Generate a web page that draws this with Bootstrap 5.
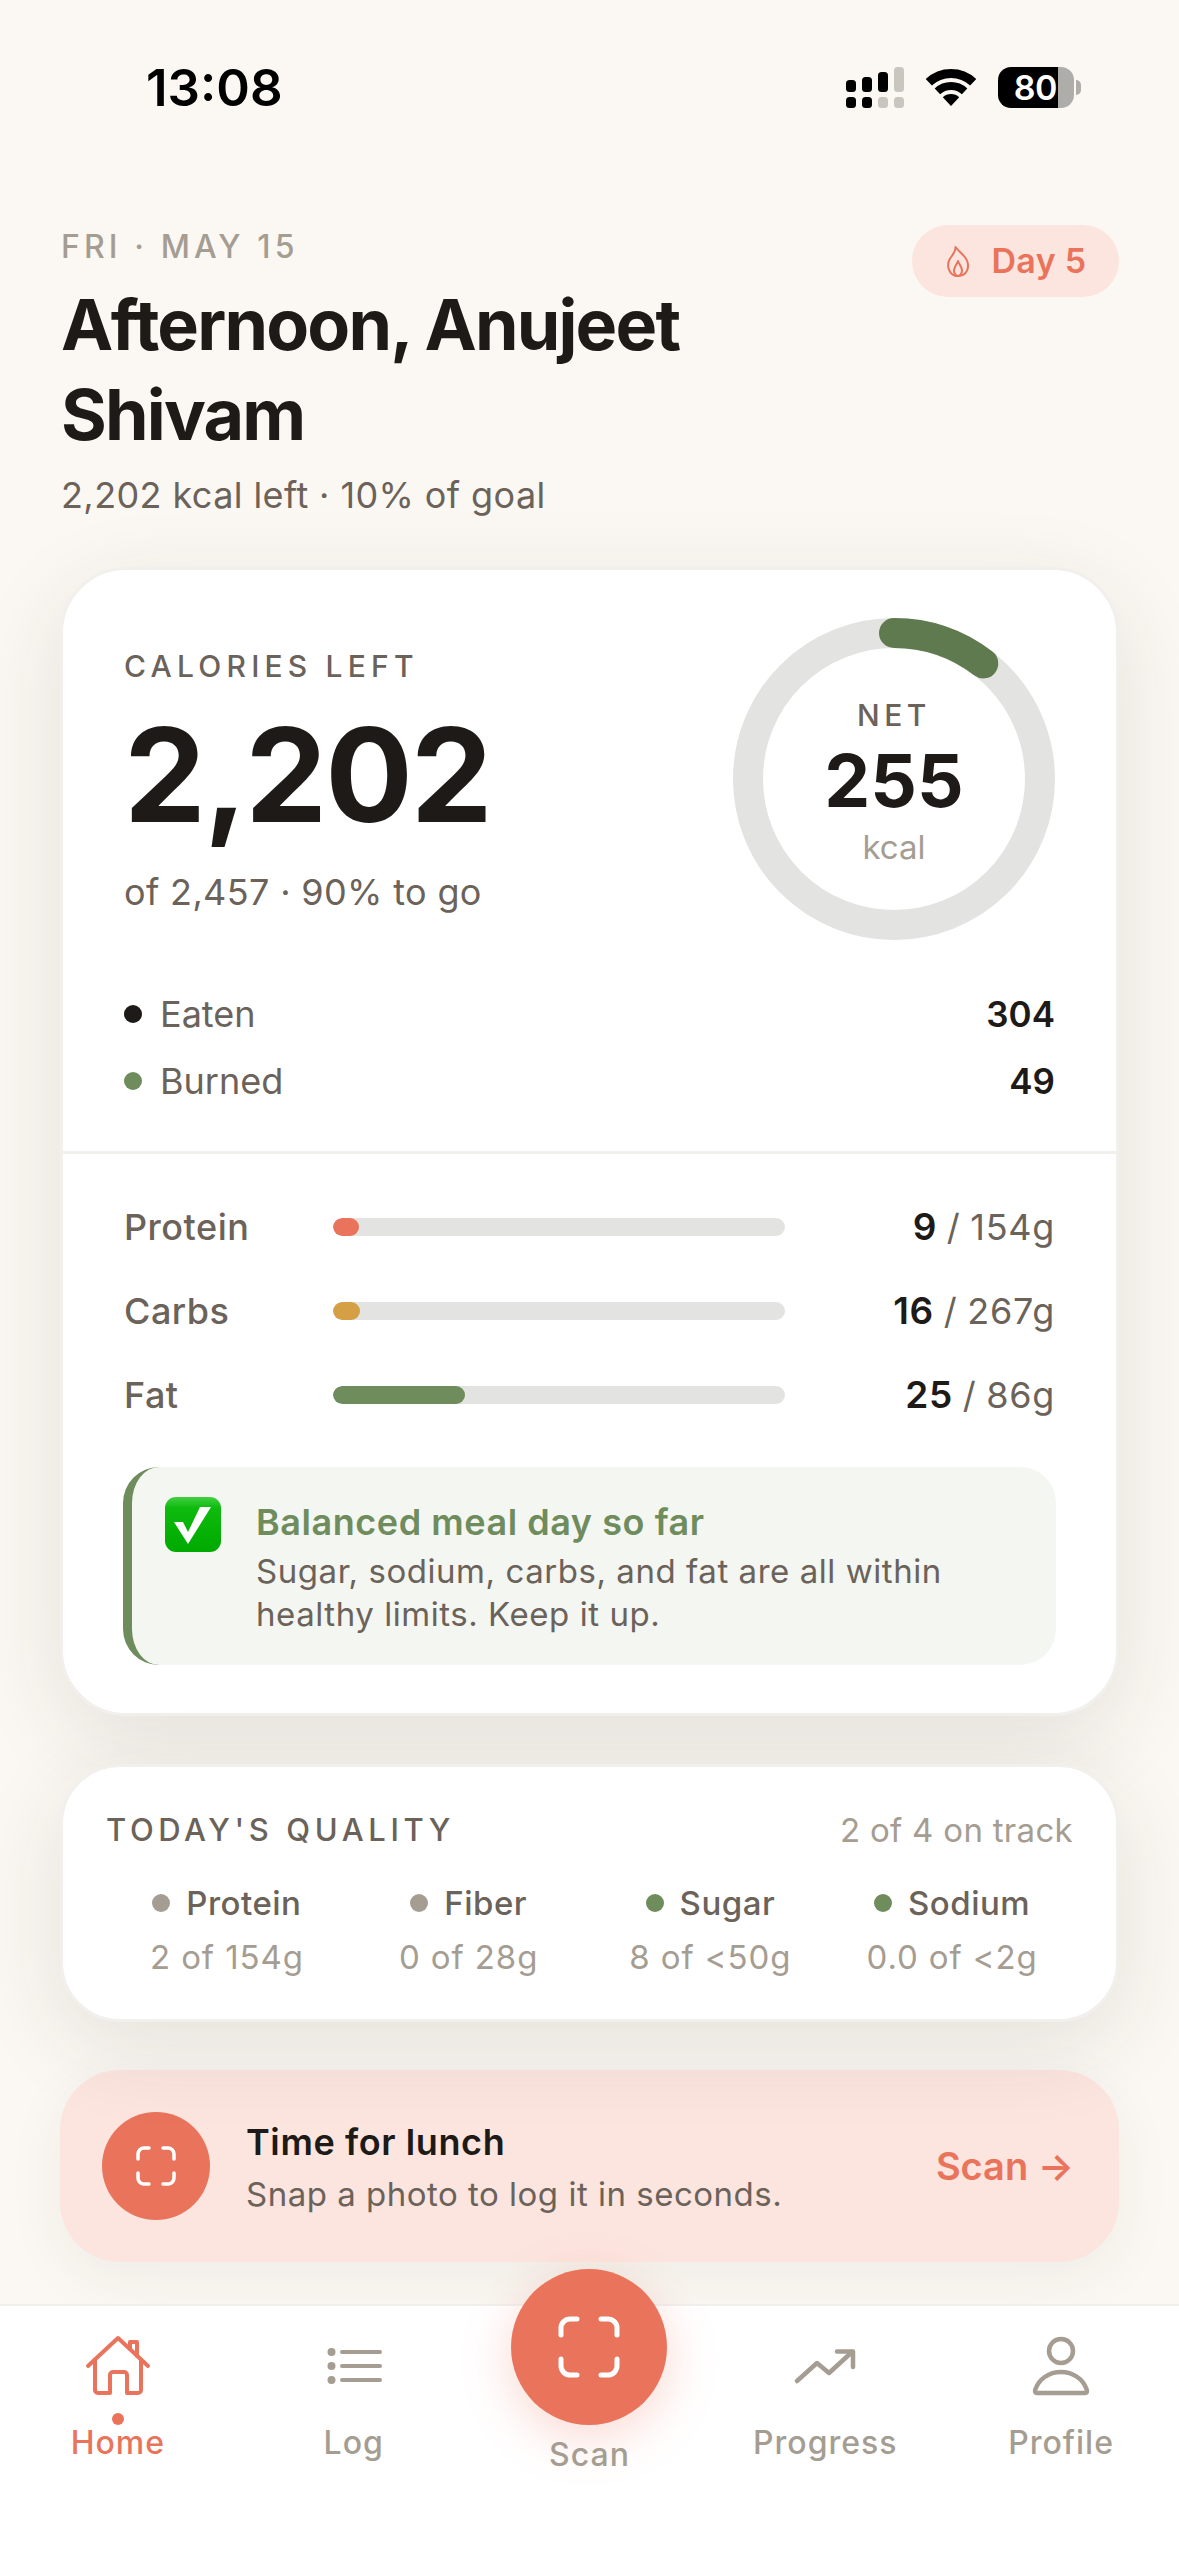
<!DOCTYPE html>
<html lang="en">
<head>
    <meta charset="UTF-8">
    <meta name="viewport" content="width=device-width, initial-scale=1.0">
    <title>Home</title>
    <link href="https://cdn.jsdelivr.net/npm/bootstrap@5.3.0/dist/css/bootstrap.min.css" rel="stylesheet">
    <style>
        :root {
            --accent: #e9745b;
            --peach: #fce5df;
            --ink: #1d1a17;
            --muted: #6b625a;
            --faint: #a59d92;
            --sage: #6f8c5c;
        }
        body {
            width: 1179px;
            height: 2556px;
            overflow: hidden;
            background: #fbf8f3;
            color: var(--ink);
            font-family: Inter, "Liberation Sans", sans-serif;
            font-size: 36px;
            line-height: 44px;
        }
        /* status bar */
        .status-bar {
            height: 225px;
            padding: 67px 98px 0 146px;
        }
        .status-time {
            font-size: 51px;
            line-height: 41px;
            font-weight: 600;
            color: #000;
        }
        .status-icons {
            gap: 21px;
        }
        .batt {
            width: 76px;
            height: 41px;
            margin-right: -21px;
            border-radius: 13px;
            background: linear-gradient(90deg, #000 79%, #aeada9 79%);
            color: #fff;
            font-size: 34px;
            line-height: 41px;
            font-weight: 600;
            text-align: right;
            padding-right: 17px;
            letter-spacing: -0.5px;
        }
        .batt-nub {
            width: 5px;
            height: 15px;
            margin-left: 2px;
            border-radius: 0 8px 8px 0;
            background: #aeada9;
        }
        /* header */
        .page-main {
            padding: 0 60px 42px;
        }
        .date-line {
            margin-left: 1px;
            font-size: 32px;
            font-weight: 500;
            letter-spacing: 4.1px;
            color: var(--faint);
        }
        .hello {
            margin: 11px 0 0 1px;
            font-size: 70px;
            line-height: 90px;
            font-weight: 700;
            letter-spacing: -1.8px;
            color: var(--ink);
        }
        .hello-sub {
            margin: 13px 0 0 1px;
            font-size: 36px;
            letter-spacing: .4px;
            color: var(--muted);
        }
        .day-pill {
            width: 207px;
            height: 72px;
            flex: none;
            gap: 23px;
            padding-left: 2px;
            border-radius: 36px;
            background: var(--peach);
            color: var(--accent);
            font-size: 34px;
            font-weight: 600;
            letter-spacing: .3px;
        }
        /* cards */
        .panel {
            border: 3px solid #f1f0ed;
            background: #fff;
            box-shadow: 0 24px 90px rgba(50, 45, 35, .11);
        }
        .panel-main {
            margin-top: 50px;
            border-radius: 66px;
        }
        .panel-top {
            padding: 48px 61px 48px;
        }
        .panel-bottom {
            padding: 51px 61px 48px;
            border-top: 3px solid #f1f0ed;
        }
        .calorie-col {
            padding-top: 26px;
        }
        .eyebrow {
            font-size: 30px;
            font-weight: 500;
            letter-spacing: 5.2px;
            color: var(--muted);
        }
        .big-num {
            margin-top: 22px;
            font-size: 130px;
            line-height: 130px;
            font-weight: 700;
            letter-spacing: -2px;
        }
        .big-sub {
            margin-top: 30px;
            font-size: 36px;
            letter-spacing: .35px;
            color: var(--muted);
        }
        .ring-box {
            width: 322px;
            height: 322px;
        }
        .ring-center {
            padding-top: 4px;
        }
        .ring-net {
            font-size: 30px;
            font-weight: 500;
            letter-spacing: 4.5px;
            color: var(--muted);
        }
        .ring-val {
            margin-top: 4px;
            font-size: 73px;
            line-height: 80px;
            font-weight: 700;
        }
        .ring-unit {
            margin-top: 4px;
            font-size: 33px;
            color: var(--faint);
        }
        .stat-rows {
            margin-top: 52px;
            gap: 23px;
        }
        .stat-name {
            gap: 18px;
            font-size: 36px;
            color: var(--muted);
        }
        .stat-val {
            font-size: 35px;
            font-weight: 600;
            color: var(--ink);
        }
        .pip {
            width: 18px;
            height: 18px;
            flex: none;
            border-radius: 50%;
        }
        .macro-rows {
            gap: 40px;
        }
        .macro-name {
            width: 209px;
            flex: none;
            font-size: 36px;
            font-weight: 500;
            letter-spacing: .5px;
            color: var(--muted);
        }
        .macro-bar.progress {
            width: 452px;
            height: 18px;
            flex: none;
            border-radius: 9px;
            background: #e3e3e1;
        }
        .macro-bar .progress-bar {
            border-radius: 9px;
        }
        .macro-val {
            font-size: 36px;
            letter-spacing: .7px;
            word-spacing: -1px;
            color: var(--muted);
        }
        .macro-val b {
            font-size: 37px;
            font-weight: 600;
            color: var(--ink);
        }
        .tip {
            margin: 50px -1px 0;
            height: 198px;
            gap: 35px;
            padding: 30px 40px 0 33px;
            border-left: 9px solid var(--sage);
            border-radius: 36px;
            background: #f4f6f2;
        }
        .tip-body {
            padding-top: 3px;
        }
        .tip-title {
            font-size: 36px;
            font-weight: 600;
            letter-spacing: .55px;
            color: var(--sage);
        }
        .tip-text {
            margin-top: 6px;
            font-size: 33px;
            line-height: 43px;
            letter-spacing: .55px;
            color: var(--muted);
        }
        .panel-quality {
            margin-top: 48px;
            padding: 41px 43px 40px;
            border-radius: 60px;
        }
        .eyebrow-lg {
            font-size: 31px;
            font-weight: 500;
            letter-spacing: 4.6px;
            color: var(--muted);
        }
        .track-note {
            font-size: 33px;
            letter-spacing: .3px;
            color: var(--faint);
        }
        .quality-row {
            margin-top: 29px;
        }
        .quality-name {
            gap: 16px;
            font-size: 33px;
            font-weight: 500;
            letter-spacing: .5px;
            color: var(--muted);
        }
        .quality-sub {
            margin-top: 10px;
            font-size: 33px;
            letter-spacing: .9px;
            color: var(--faint);
        }
        .lunch {
            margin-top: 48px;
            padding: 42px 45px 42px 42px;
            gap: 36px;
            border-radius: 60px;
            background: var(--peach);
            box-shadow: 0 16px 60px rgba(50, 45, 35, .06);
        }
        .lunch-ico {
            width: 108px;
            height: 108px;
            flex: none;
            border-radius: 50%;
            background: var(--accent);
        }
        .lunch-text {
            padding-top: 3px;
        }
        .lunch-title {
            font-size: 36px;
            font-weight: 600;
            letter-spacing: .6px;
            color: var(--ink);
        }
        .lunch-sub {
            margin-top: 8px;
            font-size: 33px;
            letter-spacing: .5px;
            color: var(--muted);
        }
        .lunch-go {
            font-size: 38px;
            font-weight: 600;
            color: var(--accent);
        }
        /* tab bar */
        .tabbar {
            position: relative;
            height: 252px;
            padding-top: 28px;
            background: #fff;
            border-top: 2px solid #f1f0ed;
        }
        .tab {
            position: relative;
            flex: 1 0 0;
            font-size: 32px;
            line-height: 40px;
            font-weight: 500;
            letter-spacing: 1px;
            color: var(--faint);
            text-align: center;
        }
        .tab svg {
            display: block;
            margin: 0 auto;
        }
        .tab-label {
            margin-top: 23px;
        }
        .tab-on {
            color: var(--accent);
        }
        .tab-dot {
            position: absolute;
            top: 79px;
            left: 50%;
            width: 12px;
            height: 12px;
            margin-left: -6px;
            border-radius: 50%;
            background: var(--accent);
        }
        .fab {
            width: 156px;
            height: 156px;
            margin: -65px auto 0;
            border-radius: 50%;
            background: var(--accent);
            box-shadow: 0 12px 50px rgba(233, 116, 91, .28);
        }
        .fab-label {
            margin-top: 10px;
        }
    </style>
</head>
<body class="d-flex flex-column">
    <div class="status-bar d-flex justify-content-between align-items-start">
        <div class="status-time">13:08</div>
        <div class="status-icons d-flex align-items-center">
            <!-- signal -->
            <svg width="58" height="41" viewBox="0 0 58 41">
                <rect x="0" y="13" width="10" height="12" rx="3.5"/>
                <rect x="16" y="10" width="10" height="15" rx="3.5"/>
                <rect x="32" y="5" width="10" height="20" rx="3.5"/>
                <rect x="48" y="0" width="10" height="25" rx="3.5" fill="#c9c6c0"/>
                <rect x="0" y="30" width="10" height="11" rx="3.5"/>
                <rect x="16" y="30" width="10" height="11" rx="3.5"/>
                <rect x="32" y="30" width="10" height="11" rx="3.5" fill="#c9c6c0"/>
                <rect x="48" y="30" width="10" height="11" rx="3.5" fill="#c9c6c0"/>
            </svg>
            <!-- wifi -->
            <svg width="52" height="41" viewBox="926 67 52 41" fill="none" stroke="#000">
                <path d="M929.8 82.2A32.5 32.5 0 0 1 974.2 82.2" stroke-width="9"/>
                <path d="M938.4 91.4A20 20 0 0 1 965.6 91.4" stroke-width="8"/>
                <path d="M952 106L943.8 97.2A12 12 0 0 1 960.2 97.2Z" fill="#000" stroke="none"/>
            </svg>
            <div class="batt">80</div>
            <div class="batt-nub"></div>
        </div>
    </div>

    <main class="page-main">
        <div class="d-flex justify-content-between align-items-start">
            <div>
                <div class="date-line">FRI · MAY 15</div>
                <h1 class="hello">Afternoon, Anujeet<br>Shivam</h1>
                <div class="hello-sub">2,202 kcal left · 10% of goal</div>
            </div>
            <div class="day-pill d-flex align-items-center justify-content-center">
                <svg width="22" height="31" viewBox="1 1 22 31" fill="none" stroke="#e9745b" stroke-width="2" stroke-linejoin="round">
                    <path d="M9.5 2C10 7 6 10 3.5 14.5C0.500 20 2.500 31 12 31C21.500 31 23.500 22 21 15.500C19 10.500 14 8 9.500 2Z"/>
                    <path d="M12 16C10.500 20 8 22 8 25.500C8 28.500 10 31 12 31C14 31 16 28.500 16 25.500C16 22 13.500 20 12 16Z"/>
                </svg>
                <span>Day 5</span>
            </div>
        </div>

        <section class="card panel panel-main">
            <div class="panel-top">
                <div class="d-flex justify-content-between align-items-start">
                    <div class="calorie-col">
                        <div class="eyebrow">CALORIES LEFT</div>
                        <div class="big-num">2,202</div>
                        <div class="big-sub">of 2,457 · 90% to go</div>
                    </div>
                    <div class="ring-box position-relative">
                        <svg width="322" height="322" viewBox="0 0 322 322" fill="none" stroke-width="30">
                            <circle cx="161" cy="161" r="146" stroke="#e3e3e1"/>
                            <circle cx="161" cy="161" r="146" stroke="#5f7a4e" stroke-linecap="round" stroke-dasharray="96 822" transform="rotate(-90 161 161)"/>
                        </svg>
                        <div class="ring-center position-absolute top-50 start-50 translate-middle text-center">
                            <div class="ring-net">NET</div>
                            <div class="ring-val">255</div>
                            <div class="ring-unit">kcal</div>
                        </div>
                    </div>
                </div>
                <div class="stat-rows d-flex flex-column">
                    <div class="d-flex justify-content-between">
                        <div class="stat-name d-flex align-items-center"><span class="pip" style="background:#1d1a17"></span>Eaten</div>
                        <div class="stat-val">304</div>
                    </div>
                    <div class="d-flex justify-content-between">
                        <div class="stat-name d-flex align-items-center"><span class="pip" style="background:#6f8c5c"></span>Burned</div>
                        <div class="stat-val">49</div>
                    </div>
                </div>
            </div>
            <div class="panel-bottom">
                <div class="macro-rows d-flex flex-column">
                    <div class="d-flex align-items-center">
                        <div class="macro-name">Protein</div>
                        <div class="macro-bar progress"><div class="progress-bar" style="width:26px;background:#e9745b"></div></div>
                        <div class="macro-val flex-grow-1 text-end"><b>9</b> / 154g</div>
                    </div>
                    <div class="d-flex align-items-center">
                        <div class="macro-name">Carbs</div>
                        <div class="macro-bar progress"><div class="progress-bar" style="width:27px;background:#d49f45"></div></div>
                        <div class="macro-val flex-grow-1 text-end"><b>16</b> / 267g</div>
                    </div>
                    <div class="d-flex align-items-center">
                        <div class="macro-name">Fat</div>
                        <div class="macro-bar progress"><div class="progress-bar" style="width:132px;background:#6f8c5c"></div></div>
                        <div class="macro-val flex-grow-1 text-end"><b>25</b> / 86g</div>
                    </div>
                </div>
                <div class="tip d-flex align-items-start">
                    <svg class="flex-shrink-0" width="56" height="55" viewBox="0 0 56 55">
                        <defs>
                            <linearGradient id="chk" x1="0" y1="0" x2="0" y2="1">
                                <stop offset="0" stop-color="#43cf43"/>
                                <stop offset=".2" stop-color="#0dbb0d"/>
                                <stop offset="1" stop-color="#00a900"/>
                            </linearGradient>
                        </defs>
                        <rect width="56" height="55" rx="11" fill="url(#chk)"/>
                        <polygon points="46,10 35,10 23,35 18,25 9,25 23,47" fill="#fff"/>
                    </svg>
                    <div class="tip-body">
                        <div class="tip-title">Balanced meal day so far</div>
                        <div class="tip-text">Sugar, sodium, carbs, and fat are all within healthy limits. Keep it up.</div>
                    </div>
                </div>
            </div>
        </section>

        <section class="card panel panel-quality">
            <div class="d-flex justify-content-between align-items-center">
                <div class="eyebrow-lg">TODAY'S QUALITY</div>
                <div class="track-note">2 of 4 on track</div>
            </div>
            <div class="quality-row row g-0 text-center">
                <div class="col-3">
                    <div class="quality-name d-flex align-items-center justify-content-center"><span class="pip" style="background:#a59d92"></span>Protein</div>
                    <div class="quality-sub">2 of 154g</div>
                </div>
                <div class="col-3">
                    <div class="quality-name d-flex align-items-center justify-content-center"><span class="pip" style="background:#a59d92"></span>Fiber</div>
                    <div class="quality-sub">0 of 28g</div>
                </div>
                <div class="col-3">
                    <div class="quality-name d-flex align-items-center justify-content-center"><span class="pip" style="background:#6f8c5c"></span>Sugar</div>
                    <div class="quality-sub">8 of &lt;50g</div>
                </div>
                <div class="col-3">
                    <div class="quality-name d-flex align-items-center justify-content-center"><span class="pip" style="background:#6f8c5c"></span>Sodium</div>
                    <div class="quality-sub">0.0 of &lt;2g</div>
                </div>
            </div>
        </section>

        <section class="lunch d-flex align-items-center">
            <div class="lunch-ico d-flex align-items-center justify-content-center">
                <svg width="40" height="40" viewBox="0 0 40 40" fill="none" stroke="#fff" stroke-width="3.500" stroke-linecap="round">
                    <path d="M2 13V8a6 6 0 0 1 6-6h5M27 2h5a6 6 0 0 1 6 6v5M38 27v5a6 6 0 0 1-6 6h-5M13 38H8a6 6 0 0 1-6-6v-5"/>
                </svg>
            </div>
            <div class="lunch-text flex-grow-1">
                <div class="lunch-title">Time for lunch</div>
                <div class="lunch-sub">Snap a photo to log it in seconds.</div>
            </div>
            <div class="lunch-go">Scan →</div>
        </section>
    </main>

    <nav class="tabbar d-flex align-items-start">
        <div class="tab tab-on">
            <svg width="66" height="66" viewBox="0 0 66 66" fill="none" stroke="#e9745b" stroke-width="4" stroke-linecap="round" stroke-linejoin="round">
                <path d="M3 32L33 4L63 32"/>
                <path d="M10 26V56a3 3 0 0 0 3 3H25V41a3 3 0 0 1 3-3H39a3 3 0 0 1 3 3V59H53a3 3 0 0 0 3-3V26"/>
                <path d="M45 14V8h7V22"/>
            </svg>
            <span class="tab-dot"></span>
            <div class="tab-label">Home</div>
        </div>
        <div class="tab">
            <svg width="66" height="66" viewBox="0 0 66 66" fill="none" stroke="#a59d92" stroke-width="4" stroke-linecap="round">
                <path d="M21 18H59M21 32H59M21 46H59"/>
                <circle cx="10.500" cy="18" r="4" fill="#a59d92" stroke="none"/>
                <circle cx="10.500" cy="32" r="4" fill="#a59d92" stroke="none"/>
                <circle cx="10.500" cy="46" r="4" fill="#a59d92" stroke="none"/>
            </svg>
            <div class="tab-label">Log</div>
        </div>
        <div class="tab">
            <div class="fab d-flex align-items-center justify-content-center">
                <svg width="62" height="62" viewBox="0 0 62 62" fill="none" stroke="#fff" stroke-width="5" stroke-linecap="round">
                    <path d="M3 19V12a9 9 0 0 1 9-9h7M43 3h7a9 9 0 0 1 9 9v7M59 43v7a9 9 0 0 1-9 9h-7M19 59h-7a9 9 0 0 1-9-9v-7"/>
                </svg>
            </div>
            <div class="fab-label">Scan</div>
        </div>
        <div class="tab">
            <svg width="66" height="66" viewBox="0 0 66 66" fill="none" stroke="#a59d92" stroke-width="4.500" stroke-linecap="round" stroke-linejoin="round">
                <path d="M5 47L25 29L37 39L60 18"/>
                <path d="M45 17.500H61V33"/>
            </svg>
            <div class="tab-label">Progress</div>
        </div>
        <div class="tab">
            <svg width="66" height="66" viewBox="0 0 66 66" fill="none" stroke="#a59d92" stroke-width="4.500" stroke-linejoin="round">
                <circle cx="33" cy="17" r="12"/>
                <path d="M9 59C7 59 6.500 57 7.500 55C11 45 21 38 33 38C45 38 55 45 58.500 55C59.500 57 59 59 57 59Z"/>
            </svg>
            <div class="tab-label">Profile</div>
        </div>
    </nav>

    <script src="https://cdn.jsdelivr.net/npm/bootstrap@5.3.0/dist/js/bootstrap.bundle.min.js"></script>
</body>
</html>
